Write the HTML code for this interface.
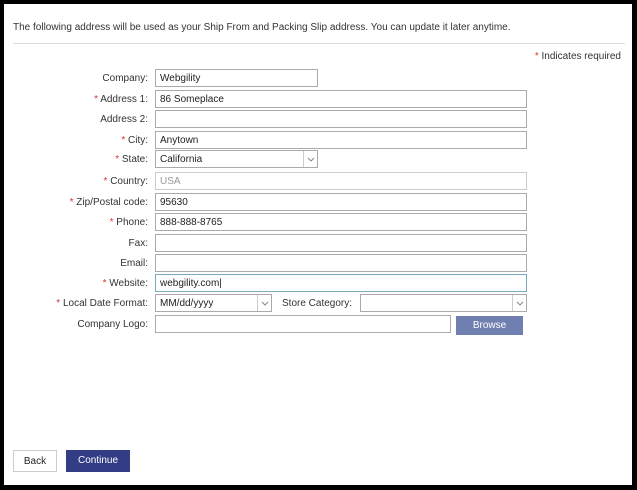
<!DOCTYPE html><html><head><style>
*{box-sizing:border-box}
body{margin:0;width:637px;height:490px;background:#000;font-family:"Liberation Sans",sans-serif;font-size:10px;color:#333;overflow:hidden}
.p{position:absolute;left:4px;top:4px;width:628px;height:481px;background:#fff}
.a{position:absolute}
.l{position:absolute;right:484px;text-align:right;white-space:nowrap;line-height:20px}
.r{color:#d33}
.i{position:absolute;border:1px solid #aaa;height:18px;background:#fff;padding-left:4px;line-height:17px;color:#222}
.s .ar{position:absolute;right:0;top:0;width:14px;height:16px;border-left:1px solid #ccc}
</style></head><body><div class="p">
<div class="a" style="left:9px;top:18px">The following address will be used as your Ship From and Packing Slip address. You can update it later anytime.</div>
<div class="a" style="left:9px;top:39px;width:612px;border-top:1px solid #ddd"></div>
<div class="a" style="right:11px;top:47px"><span class="r">*</span> Indicates required</div>

<div class="l" style="top:65px">Company:</div><div class="i" style="left:151px;top:65px;width:163px">Webgility</div>
<div class="l" style="top:86px"><span class="r">*</span> Address 1:</div><div class="i" style="left:151px;top:86px;width:372px">86 Someplace</div>
<div class="l" style="top:106px">Address 2:</div><div class="i" style="left:151px;top:106px;width:372px"></div>
<div class="l" style="top:127px"><span class="r">*</span> City:</div><div class="i" style="left:151px;top:127px;width:372px">Anytown</div>
<div class="l" style="top:146px"><span class="r">*</span> State:</div><div class="i s" style="left:151px;top:146px;width:163px">California<span class="ar"><svg width="13" height="16"><path d="M4 7l3 3 3-3" fill="none" stroke="#888"/></svg></span></div>
<div class="l" style="top:168px"><span class="r">*</span> Country:</div><div class="i" style="left:151px;top:168px;width:372px;border-color:#ccc;color:#999">USA</div>
<div class="l" style="top:189px"><span class="r">*</span> Zip/Postal code:</div><div class="i" style="left:151px;top:189px;width:372px">95630</div>
<div class="l" style="top:209px"><span class="r">*</span> Phone:</div><div class="i" style="left:151px;top:209px;width:372px">888-888-8765</div>
<div class="l" style="top:230px">Fax:</div><div class="i" style="left:151px;top:230px;width:372px"></div>
<div class="l" style="top:250px">Email:</div><div class="i" style="left:151px;top:250px;width:372px"></div>
<div class="l" style="top:270px"><span class="r">*</span> Website:</div><div class="i" style="left:151px;top:270px;width:372px;border-color:#7ab">webgility.com|</div>
<div class="l" style="top:290px"><span class="r">*</span> Local Date Format:</div><div class="i s" style="left:151px;top:290px;width:117px">MM/dd/yyyy<span class="ar"><svg width="13" height="16"><path d="M4 7l3 3 3-3" fill="none" stroke="#888"/></svg></span></div>
<div class="a" style="left:278px;top:290px;line-height:20px">Store Category:</div><div class="i s" style="left:356px;top:290px;width:167px"><span class="ar"><svg width="13" height="16"><path d="M4 7l3 3 3-3" fill="none" stroke="#888"/></svg></span></div>
<div class="l" style="top:311px">Company Logo:</div><div class="i" style="left:151px;top:311px;width:296px"></div>
<div class="a" style="left:452px;top:312px;width:67px;height:19px;background:#6f7fb0;color:#fff;text-align:center;line-height:19px">Browse</div>
<div class="a" style="left:9px;top:446px;width:44px;height:22px;border:1px solid #ccc;text-align:center;line-height:21px;color:#222">Back</div>
<div class="a" style="left:62px;top:446px;width:64px;height:22px;background:#333d85;color:#fff;text-align:center;line-height:22px">Continue</div>
</div></body></html>
